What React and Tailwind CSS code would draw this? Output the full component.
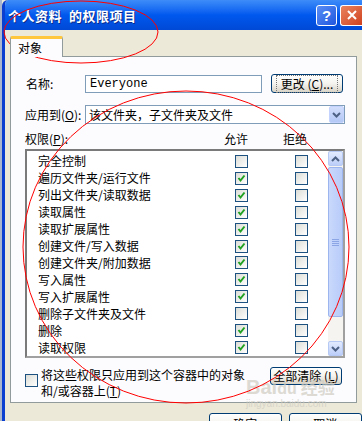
import React from 'react';

const rows = [
    ['完全控制', false],
    ['遍历文件夹/运行文件', true],
    ['列出文件夹/读取数据', true],
    ['读取属性', true],
    ['读取扩展属性', true],
    ['创建文件/写入数据', true],
    ['创建文件夹/附加数据', true],
    ['写入属性', true],
    ['写入扩展属性', true],
    ['删除子文件夹及文件', false],
    ['删除', true],
    ['读取权限', true],
];

const Box = ({ checked }) => (
    <span className="w-[13px] h-[13px] shrink-0 border border-[#1C5180] bg-gradient-to-br from-[#DCDCD7] to-[#FFFFFF] flex items-center justify-center">
        {checked && (
            <svg width="9" height="9" viewBox="0 0 9 9">
                <path d="M1.5 4 L3.5 6.5 L7.5 1.5" stroke="#21A121" strokeWidth="2" fill="none" />
            </svg>
        )}
    </span>
);

const Chevron = ({ up }) => (
    <svg width="9" height="6" viewBox="0 0 9 6">
        <path d={up ? 'M1 5 L4.5 1.5 L8 5' : 'M1 1 L4.5 4.5 L8 1'} stroke="#4D6185" strokeWidth="2" fill="none" />
    </svg>
);

const XpButton = ({ children, className = '' }) => (
    <div className={`rounded-[3px] border border-[#003C74] bg-gradient-to-b from-[#FFFFFF] via-[#F4F3EE] to-[#D9D4C8] flex items-center justify-center ${className}`}>
        {children}
    </div>
);

const App = () => {
    return (
        <div className="relative w-[362px] h-[421px] overflow-hidden bg-[#ECE9D8] text-[12px] text-black leading-none font-['Noto_Sans_CJK_SC','Liberation_Sans',sans-serif]">
            <div className="flex h-full">
                <div className="w-[2px] bg-[#A9B6CE]" />
                <div className="flex-1 flex flex-col border-l-[3px] border-[#0A3FCF] rounded-tl-[6px] overflow-hidden">
                    {/* title bar */}
                    <div className="h-[30px] shrink-0 flex items-center bg-gradient-to-b from-[#3D8CF9] via-[#0058EE] to-[#0049D6] pl-[3px] pr-0">
                        <span className="flex-1 text-white font-bold text-[13px] tracking-[0.5px] [text-shadow:1px_1px_0_#0B2B8C]">
                            个人资料&nbsp; 的权限项目
                        </span>
                        <div className="w-[21px] h-[21px] rounded-[3px] border border-white bg-gradient-to-br from-[#5A8EF5] to-[#1F55DE] flex items-center justify-center text-white font-bold text-[15px] font-['Liberation_Sans',sans-serif]">
                            ?
                        </div>
                        <div className="ml-[3px] w-[22px] h-[21px] rounded-l-[3px] border border-r-0 border-white bg-gradient-to-br from-[#E9835E] to-[#D0401C] flex items-center justify-center">
                            <svg width="12" height="12" viewBox="0 0 12 12">
                                <path d="M2 2 L10 10 M10 2 L2 10" stroke="white" strokeWidth="2" />
                            </svg>
                        </div>
                    </div>

                    {/* body */}
                    <div className="flex-1 flex flex-col pl-[5px] pt-[6px]">
                        <div className="relative z-10 -mb-px w-[53px] h-[21px] border-t-[3px] border-t-[#FFC83C] border-x border-[#919B9C] bg-[#FCFCFE] pl-[7px] pt-[3px] rounded-t-[2px]">
                            对象
                        </div>
                        <div className="w-[347px] h-[347px] border border-[#919B9C] bg-[#FCFCFE] flex flex-col pl-[14px] pt-[16px]">
                            <div className="flex items-center h-[21px]">
                                <span className="w-[60px] pl-[1px]">名称:</span>
                                <div className="w-[177px] h-[18px] border border-[#7F9DB9] bg-white flex items-center pl-[4px] font-['Liberation_Mono',monospace] text-[12px]">
                                    Everyone
                                </div>
                                <XpButton className="ml-[9px] w-[72px] h-[19px]">
                                    <span className="border border-dotted border-[#777] px-[4px] py-[2px]">
                                        更改 (<span className="underline">C</span>)...
                                    </span>
                                </XpButton>
                            </div>

                            <div className="flex items-center h-[19px] mt-[11px]">
                                <span className="w-[60px]">应用到(<span className="underline">O</span>):</span>
                                <div className="w-[260px] h-[19px] border border-[#7F9DB9] bg-white flex items-center pl-[3px]">
                                    <span className="flex-1">该文件夹，子文件夹及文件</span>
                                    <div className="w-[15px] h-[17px] rounded-[2px] bg-gradient-to-b from-[#D2DEFB] to-[#B4C8F6] border border-[#C3D3FD] flex items-center justify-center">
                                        <Chevron />
                                    </div>
                                </div>
                            </div>

                            <div className="flex items-center h-[16px] mt-[7px]">
                                <span className="w-[199px]">权限(<span className="underline">P</span>):</span>
                                <span className="w-[59px]">允许</span>
                                <span>拒绝</span>
                            </div>

                            <div className="mt-[2px] w-[320px] h-[209px] border-2 border-t-[#7A7A7A] border-l-[#7A7A7A] border-r-[#A0A0A0] border-b-[#A0A0A0] bg-white flex">
                                <div className="flex-1 flex flex-col pt-[2px]">
                                    {rows.map(([label, allow]) => (
                                        <div key={label} className="h-[17px] flex items-center pl-[11px]">
                                            <span className="w-[197px] whitespace-nowrap">{label}</span>
                                            <Box checked={allow} />
                                            <span className="ml-[47px]"><Box checked={false} /></span>
                                        </div>
                                    ))}
                                </div>
                                <div className="w-[15px] bg-[#F5F4F0] flex flex-col">
                                    <div className="h-[15px] rounded-[2px] border border-[#B6C8F4] bg-gradient-to-b from-[#E2EAFE] to-[#BCCEF8] flex items-center justify-center">
                                        <Chevron up />
                                    </div>
                                    <div className="mt-[1px] h-[150px] rounded-[2px] border border-[#9DB5EF] bg-gradient-to-r from-[#C9D8FC] to-[#B8CCF9] flex flex-col items-center justify-center gap-[1px]">
                                        <span className="w-[7px] h-[1px] bg-[#8CA6E5]" />
                                        <span className="w-[7px] h-[1px] bg-[#8CA6E5]" />
                                        <span className="w-[7px] h-[1px] bg-[#8CA6E5]" />
                                        <span className="w-[7px] h-[1px] bg-[#8CA6E5]" />
                                    </div>
                                    <div className="flex-1" />
                                    <div className="h-[15px] rounded-[2px] border border-[#B6C8F4] bg-gradient-to-b from-[#E2EAFE] to-[#BCCEF8] flex items-center justify-center">
                                        <Chevron />
                                    </div>
                                </div>
                            </div>

                            <div className="flex items-start mt-[9px]">
                                <div className="mt-[7px]"><Box checked={false} /></div>
                                <div className="ml-[3px] w-[229px] leading-[16px]">
                                    <div>将这些权限只应用到这个容器中的对象</div>
                                    <div>和/或容器上(<span className="underline">T</span>)</div>
                                </div>
                                <XpButton className="w-[72px] h-[18px]">
                                    全部清除 (<span className="underline">L</span>)
                                </XpButton>
                            </div>
                        </div>

                        <div className="flex gap-[7px] ml-[199px] mt-[10px]">
                            <XpButton className="w-[73px] h-[23px] items-start pt-[4px]">确定</XpButton>
                            <XpButton className="w-[74px] h-[23px] items-start pt-[4px]">取消</XpButton>
                        </div>
                    </div>
                </div>
            </div>

            {/* watermark */}
            <div className="absolute left-[246px] top-[377px] pointer-events-none flex flex-col items-start text-[#CFCCC2] opacity-70">
                <div className="flex items-baseline font-bold text-[20px] leading-none font-['Liberation_Sans',sans-serif]">
                    <span>Bai</span><span className="text-[16px]">du</span>
                    <span className="ml-[4px] text-[17px] font-['Noto_Sans_CJK_SC',sans-serif]">经验</span>
                </div>
                <div className="text-[10px] mt-[2px] font-['Liberation_Sans',sans-serif]">jingyan.baidu.com</div>
            </div>

            {/* red annotation ellipses */}
            <svg className="absolute inset-0 pointer-events-none" width="362" height="421">
                <ellipse cx="81" cy="32" rx="77" ry="31" fill="none" stroke="#FF0000" strokeWidth="1" />
                <ellipse cx="186" cy="247" rx="163" ry="156" fill="none" stroke="#FF0000" strokeWidth="1" />
            </svg>
        </div>
    );
};

export default App;
